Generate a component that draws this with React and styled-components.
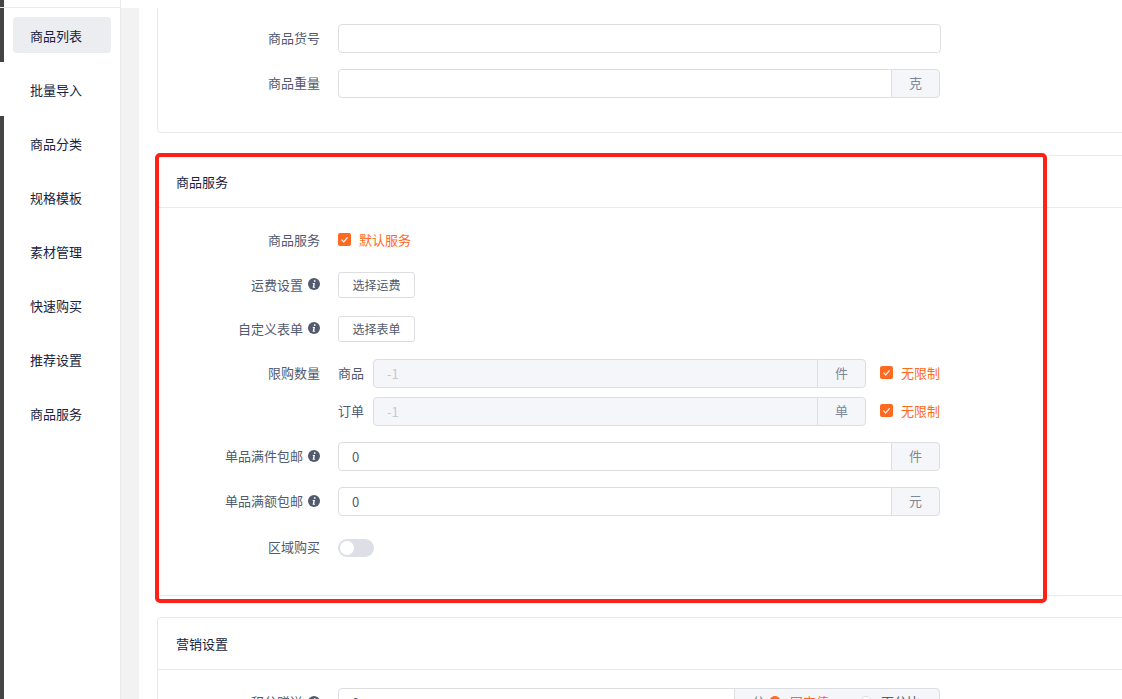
import React from "react";
import styled, { createGlobalStyle } from "styled-components";

const GlobalStyle = createGlobalStyle`
  html, body {
    margin: 0;
    padding: 0;
    background: #fff;
  }
  * {
    box-sizing: border-box;
  }
`;

const Page = styled.div`
  position: relative;
  display: flex;
  width: 1122px;
  height: 699px;
  overflow: hidden;
  font-family: "Noto Sans CJK SC", "Liberation Sans", sans-serif;
  font-size: 13px;
  color: #515a6e;
`;

const Rail = styled.div`
  display: flex;
  flex-direction: column;
  flex: 0 0 4px;
  background: linear-gradient(#444 0 62px, #fff 62px 116px, #444 116px);
`;

const Sidebar = styled.nav`
  flex: 0 0 117px;
  border-right: 1px solid #e8eaec;
`;

const SidebarTop = styled.div`
  height: 8px;
  border-bottom: 1px solid #e8eaec;
  margin-left: -4px;
  margin-bottom: 9px;
`;

const NavItem = styled.div`
  display: flex;
  align-items: center;
  width: 98px;
  height: 36px;
  margin: 0 0 18px 9px;
  padding-left: 17px;
  border-radius: 4px;
  color: #17233d;
  background: ${(p) => (p.$active ? "#ebedf0" : "transparent")};
`;

const Gutter = styled.div`
  flex: 0 0 18px;
  margin-top: 8px;
  background: #f2f2f3;
`;

const Main = styled.main`
  flex: 0 0 1200px;
  padding: 8px 0 0 18px;
`;

const Card = styled.section`
  width: 1100px;
  margin-bottom: ${(p) => p.$gap}px;
  background: #fff;
  border: 1px solid #e8eaec;
  border-radius: 4px;
`;

const TopCard = styled(Card)`
  height: 125px;
  padding-top: 16px;
  border-top: 0;
  border-radius: 0 0 4px 4px;
`;

const CardHead = styled.header`
  display: flex;
  align-items: center;
  height: 52px;
  padding: 0 0 0 18px;
  border-bottom: 1px solid #e8eaec;
  color: #17233d;
  font-size: 13px;
`;

const CardBody = styled.div`
  padding-top: ${(p) => p.$top}px;
`;

const Row = styled.div`
  display: flex;
  align-items: ${(p) => p.$align || "center"};
  height: ${(p) => p.$h}px;
  margin-bottom: ${(p) => p.$mb || 0}px;
`;

const Label = styled.div`
  display: flex;
  align-items: center;
  justify-content: flex-end;
  gap: 5px;
  flex: 0 0 162px;
  margin-right: 18px;
  height: 29px;
  padding-bottom: 2px;
  color: #515a6e;
  white-space: nowrap;
`;

const InputGroup = styled.div`
  display: flex;
  width: ${(p) => p.$w || 602}px;
  height: 29px;
`;

const Field = styled.div`
  flex: 1;
  display: flex;
  align-items: center;
  padding: 0 0 1px 13px;
  background: ${(p) => (p.$disabled ? "#f5f6fa" : "#fff")};
  color: ${(p) => (p.$disabled ? "#c5c8ce" : "#515a6e")};
  border: 1px solid #dcdee2;
  border-radius: ${(p) => (p.$alone ? "4px" : "4px 0 0 4px")};
`;

const Suffix = styled.div`
  display: flex;
  align-items: center;
  justify-content: center;
  flex: 0 0 49px;
  margin-left: -1px;
  padding-bottom: 2px;
  background: #f5f6fa;
  color: #808695;
  border: 1px solid #dcdee2;
  border-radius: 0 4px 4px 0;
`;

const RadioSuffix = styled(Suffix)`
  flex: 0 0 206px;
  justify-content: flex-start;
  padding-left: 17px;
`;

const PlainButton = styled.button`
  width: 77px;
  height: 26px;
  padding: 0 0 2px;
  background: #fff;
  border: 1px solid #dcdee2;
  border-radius: 3px;
  font-family: inherit;
  font-size: 12px;
  color: #515a6e;
`;

const CheckWrap = styled.div`
  display: flex;
  align-items: center;
  gap: 8px;
  margin-left: ${(p) => p.$ml || 0}px;
  padding-bottom: 2px;
  color: #ff6a22;
`;

const CheckBox = styled.span`
  display: flex;
  align-items: center;
  justify-content: center;
  width: 13px;
  height: 13px;
  border-radius: 2px;
  background: #ff6a22;
`;

const LimitStack = styled.div`
  display: flex;
  flex-direction: column;
  gap: 9px;
`;

const LimitRow = styled.div`
  display: flex;
  align-items: center;
  height: 29px;
`;

const LimitName = styled.span`
  flex: 0 0 35px;
  padding-bottom: 2px;
`;

const Switch = styled.div`
  display: flex;
  align-items: center;
  width: 36px;
  height: 18px;
  padding-left: 2px;
  border-radius: 9px;
  background: #dcdfe6;
`;

const Knob = styled.span`
  width: 14px;
  height: 14px;
  border-radius: 50%;
  background: #fff;
`;

const Radio = styled.span`
  display: flex;
  align-items: center;
  gap: 9px;
  margin-left: ${(p) => p.$ml}px;
  color: ${(p) => (p.$on ? "#ff6a22" : "#515a6e")};
`;

const RadioDot = styled.span`
  width: 12px;
  height: 12px;
  border-radius: 50%;
  background: ${(p) => (p.$on ? "#ff6a22" : "#fff")};
  border: 1px solid ${(p) => (p.$on ? "#ff6a22" : "#dcdee2")};
`;

const RedFrame = styled.div`
  position: absolute;
  left: 155px;
  top: 153px;
  width: 892px;
  height: 450px;
  border: 4px solid #ff2116;
  border-radius: 5px;
  pointer-events: none;
`;

const Tick = () => (
  <svg width="9" height="9" viewBox="0 0 9 9">
    <path d="M1.5 4.6 L3.7 6.8 L7.6 2.4" fill="none" stroke="#fff" strokeWidth="1.2" />
  </svg>
);

const Info = () => (
  <svg width="12" height="12" viewBox="0 0 12 12">
    <circle cx="6" cy="6" r="6" fill="#515a6e" />
    <path d="M5.9 2.3h1.6v1.5H5.9zM4.8 5h2.2l-.8 3.7h.9v1H4.6l.8-3.7h-.7z" fill="#fff" />
  </svg>
);

const navItems = ["商品列表", "批量导入", "商品分类", "规格模板", "素材管理", "快速购买", "推荐设置", "商品服务"];

const Check = ({ text, ml }) => (
  <CheckWrap $ml={ml}>
    <CheckBox>
      <Tick />
    </CheckBox>
    {text}
  </CheckWrap>
);

export default function App() {
  return (
    <>
      <GlobalStyle />
      <Page>
        <Rail />
        <Sidebar>
          <SidebarTop />
          {navItems.map((item, i) => (
            <NavItem key={item} $active={i === 0}>
              {item}
            </NavItem>
          ))}
        </Sidebar>
        <Gutter />
        <Main>
          <TopCard $gap={22}>
            <Row $h={29} $mb={16}>
              <Label>商品货号</Label>
              <InputGroup $w={603}>
                <Field $alone />
              </InputGroup>
            </Row>
            <Row $h={29}>
              <Label>商品重量</Label>
              <InputGroup>
                <Field />
                <Suffix>克</Suffix>
              </InputGroup>
            </Row>
          </TopCard>

          <Card $gap={21}>
            <CardHead>商品服务</CardHead>
            <CardBody $top={18}>
              <Row $h={29} $mb={17}>
                <Label>商品服务</Label>
                <Check text="默认服务" />
              </Row>
              <Row $h={26} $mb={18}>
                <Label>
                  运费设置
                  <Info />
                </Label>
                <PlainButton>选择运费</PlainButton>
              </Row>
              <Row $h={26} $mb={17}>
                <Label>
                  自定义表单
                  <Info />
                </Label>
                <PlainButton>选择表单</PlainButton>
              </Row>
              <Row $h={67} $mb={16} $align="flex-start">
                <Label>限购数量</Label>
                <LimitStack>
                  <LimitRow>
                    <LimitName>商品</LimitName>
                    <InputGroup $w={493}>
                      <Field $disabled>-1</Field>
                      <Suffix>件</Suffix>
                    </InputGroup>
                    <Check text="无限制" ml={14} />
                  </LimitRow>
                  <LimitRow>
                    <LimitName>订单</LimitName>
                    <InputGroup $w={493}>
                      <Field $disabled>-1</Field>
                      <Suffix>单</Suffix>
                    </InputGroup>
                    <Check text="无限制" ml={14} />
                  </LimitRow>
                </LimitStack>
              </Row>
              <Row $h={29} $mb={16}>
                <Label>
                  单品满件包邮
                  <Info />
                </Label>
                <InputGroup>
                  <Field>0</Field>
                  <Suffix>件</Suffix>
                </InputGroup>
              </Row>
              <Row $h={29} $mb={17}>
                <Label>
                  单品满额包邮
                  <Info />
                </Label>
                <InputGroup>
                  <Field>0</Field>
                  <Suffix>元</Suffix>
                </InputGroup>
              </Row>
              <Row $h={29} $mb={33}>
                <Label>区域购买</Label>
                <Switch>
                  <Knob />
                </Switch>
              </Row>
            </CardBody>
          </Card>

          <Card $gap={0}>
            <CardHead>营销设置</CardHead>
            <CardBody $top={18}>
              <Row $h={29}>
                <Label>
                  积分赠送
                  <Info />
                </Label>
                <InputGroup>
                  <Field>0</Field>
                  <RadioSuffix>
                    分
                    <Radio $on $ml={4}>
                      <RadioDot $on />
                      固定值
                    </Radio>
                    <Radio $ml={31}>
                      <RadioDot />
                      百分比
                    </Radio>
                  </RadioSuffix>
                </InputGroup>
              </Row>
            </CardBody>
          </Card>
        </Main>
        <RedFrame />
      </Page>
    </>
  );
}
